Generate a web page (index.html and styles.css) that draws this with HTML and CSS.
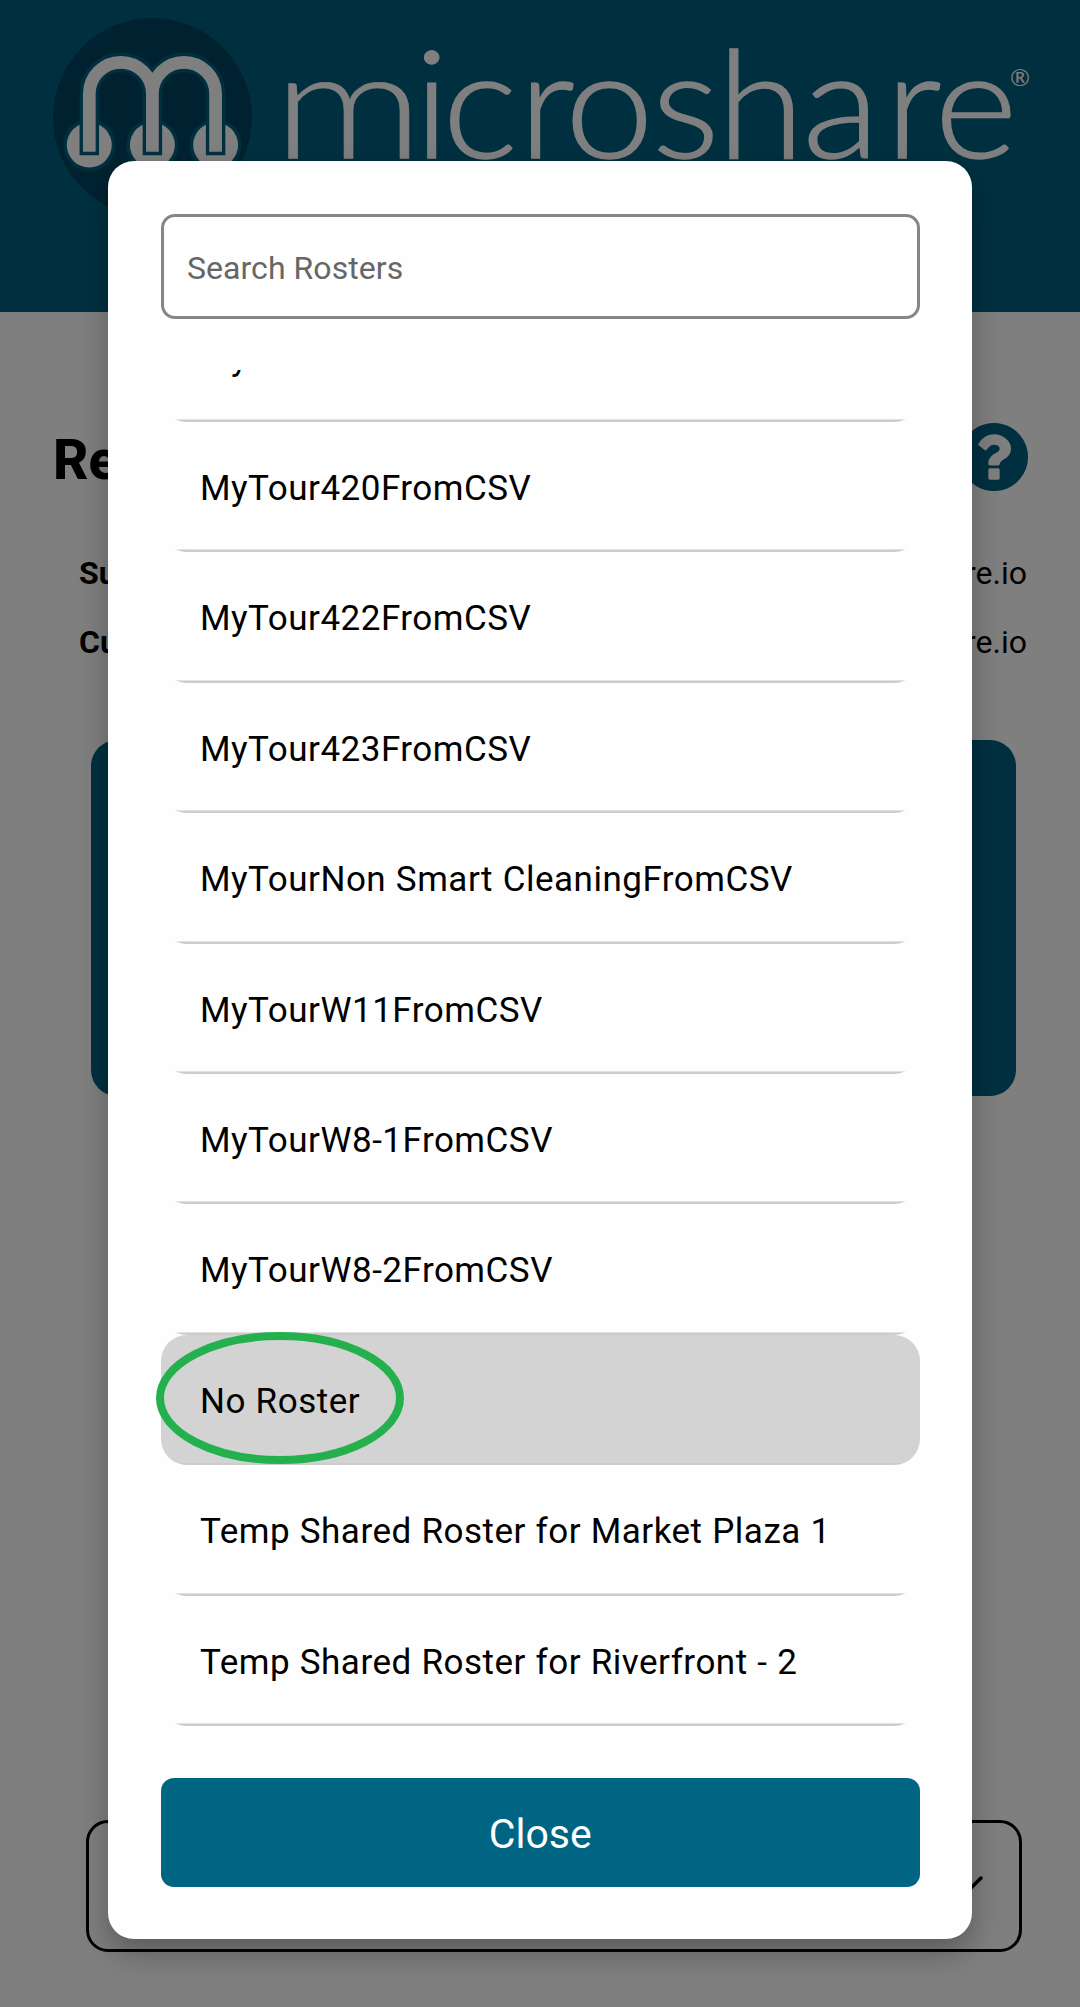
FILE: index.html
```html
<!DOCTYPE html>
<html lang="en">
<head>
<meta charset="utf-8">
<title>Microshare</title>
<link rel="stylesheet" href="styles.css">
</head>
<body>
<div class="page">
  <header class="header">
    <svg class="logo" width="1080" height="240" viewBox="0 0 1080 240" role="img" aria-label="microshare">
      <circle class="logo-disc" cx="152.4" cy="117.5" r="99.5"/>
      <g class="logo-halo">
        <circle cx="89.3" cy="145" r="26"/><circle cx="152.4" cy="145" r="26"/><circle cx="215.6" cy="145" r="26"/>
      </g>
      <g class="logo-node">
        <circle cx="89.3" cy="145" r="22.5"/><circle cx="152.4" cy="145" r="22.5"/><circle cx="215.6" cy="145" r="22.5"/>
      </g>
      <path class="logo-edge" d="M89.3 155.3V94A31.55 31.7 0 0 1 152.4 94V155.3M152.4 155.3V94A31.6 31.7 0 0 1 215.6 94V155.3"/>
      <path class="logo-m" d="M89.3 151.7V94A31.55 31.7 0 0 1 152.4 94V151.7M152.4 151.7V94A31.6 31.7 0 0 1 215.6 94V151.7"/>
      <text class="wordmark wordmark-m" transform="translate(273.5 158) scale(1.24 1)">m</text>
      <text class="wordmark" transform="translate(0 158) scale(1.06 1)" x="390.500 417.500 489.500 533 615 676.500 757 835.500 881.500">icroshare</text>
      <text class="registered" x="1010" y="86">®</text>
    </svg>
  </header>
  <main class="content">
    <div class="title-row">
      <h1 class="title">Re</h1>
      <svg class="help" width="68" height="68" viewBox="128 128 1536 1536"><path d="M1024 1376v-192q0-14-9-23t-23-9h-192q-14 0-23 9t-9 23v192q0 14 9 23t23 9h192q14 0 23-9t9-23zm256-672q0-88-55.500-163t-138.500-116-170-41q-243 0-371 213-15 24 8 42l132 100q7 6 19 6 16 0 25-12 53-68 86-92 34-24 86-24 48 0 85.500 26t37.500 59q0 38-20 61t-68 45q-63 28-115.500 86.500t-52.500 125.500v36q0 14 9 23t23 9h192q14 0 23-9t9-23q0-19 21.500-49.500t54.500-49.500q32-18 49-28.500t46-35 44.500-48 28-60.500 12.500-81zm384 192q0 209-103 385.500t-279.500 279.500-385.500 103-385.500-103-279.500-279.500-103-385.500 103-385.500 279.500-279.500 385.500-103 385.500 103 279.500 279.500 103 385.500z"/></svg>
    </div>
    <div class="info-row"><b>Su</b><span>re.io</span></div>
    <div class="info-row"><b>Cu</b><span>re.io</span></div>
    <div class="card"></div>
    <div class="select">
      <svg width="36" height="22" viewBox="0 0 36 22"><path d="M2 2l16 16L34 2"/></svg>
    </div>
  </main>
</div>
<div class="overlay">
  <section class="modal">
    <input class="search" type="text" placeholder="Search Rosters">
    <ul class="list">
      <li class="item">MyTour419FromCSV</li>
      <li class="item">MyTour420FromCSV</li>
      <li class="item">MyTour422FromCSV</li>
      <li class="item">MyTour423FromCSV</li>
      <li class="item">MyTourNon Smart CleaningFromCSV</li>
      <li class="item">MyTourW11FromCSV</li>
      <li class="item">MyTourW8-1FromCSV</li>
      <li class="item">MyTourW8-2FromCSV</li>
      <li class="item selected">No Roster<svg class="ring" width="248" height="132" viewBox="0 0 248 132"><ellipse cx="124" cy="66" rx="120" ry="62"/></svg></li>
      <li class="item">Temp Shared Roster for Market Plaza 1</li>
      <li class="item">Temp Shared Roster for Riverfront - 2</li>
    </ul>
    <button class="close" type="button">Close</button>
  </section>
</div>
</body>
</html>
```
FILE: styles.css
```css
* { box-sizing: border-box; }
body { margin: 0; font-family: Roboto, "Liberation Sans", sans-serif; color: #000; background: #fff; }
.page { height: 2007px; overflow: hidden; }

.header { height: 312px; background: #006080; }
.logo { display: block; }
.logo-disc { fill: #004461; }
.logo-halo { fill: #006080; }
.logo-node { fill: #fff; }
.logo-edge { fill: none; stroke: #006080; stroke-width: 19.5; }
.logo-m { fill: none; stroke: #fff; stroke-width: 12.7; }
.wordmark { font-family: Lato, sans-serif; font-weight: 300; font-size: 150px; fill: #fff; stroke: #fff; stroke-width: 1.4; }
.wordmark-m { stroke-width: .5; }
.registered { font-family: Lato, sans-serif; font-size: 24px; fill: #fff; }

.content { padding: 0 53px; }
.title-row { display: flex; justify-content: space-between; align-items: center; height: 68px; margin-top: 111px; margin-bottom: 56px; }
.title { margin: 0; font-size: 55px; line-height: 68px; font-weight: 800; padding-top: 6px; }
.help { fill: #006080; margin-right: -1px; }
.info-row { display: flex; justify-content: space-between; height: 68.8px; padding-left: 26px; font-size: 32px; line-height: 52px; }
.card { height: 356px; margin: 55.4px 11px 0 38px; border-radius: 26px; background: #006080; }
.select { display: flex; align-items: center; justify-content: flex-end; height: 132px; margin: 724px 5px 0 33px; padding-right: 36px; border: 3px solid #000; border-radius: 22px; }
.select svg { margin-top: 2px; fill: none; stroke: #000; stroke-width: 3.5; stroke-linecap: round; }

.overlay { position: absolute; top: 0; left: 0; width: 1080px; height: 2007px; padding: 161px 108px 68px; background: rgba(0, 0, 0, .5); }
.modal { display: flex; flex-direction: column; height: 1778px; padding: 53px 52.5px 52px 53px; border-radius: 26px; background: #fefefe; box-shadow: 0 14px 30px rgba(0, 0, 0, .28); }
.search { flex: none; height: 105px; padding: 2px 23px 0; border: 3px solid #868686; border-radius: 14px; background: #fefefe; font-family: inherit; font-size: 32px; letter-spacing: .05px; }
.search::placeholder { color: #666; opacity: 1; }
.list { display: flex; flex-direction: column; justify-content: flex-end; height: 1356px; margin: 51px 0 52px; padding: 0; overflow-x: visible; overflow-y: clip; list-style: none; }
.item { flex: none; position: relative; height: 130.4px; padding-left: 39px; border-radius: 26px; background: linear-gradient(to top, #ccc 2px, #e2e2e2 2px, #e2e2e2 3px, transparent 3px); font-size: 35px; line-height: 134px; letter-spacing: .5px; word-spacing: .5px; white-space: pre; }
.selected { background: linear-gradient(to top, #ccc 2px, #d3d3d3 2px); }
.ring { position: absolute; left: -5px; top: -3px; fill: none; stroke: #24b14d; stroke-width: 8; }
.close { height: 109px; padding: 3px 0 0; border: 0; border-radius: 13px; background: #006483; color: #fff; font-family: inherit; font-size: 41px; }
```
